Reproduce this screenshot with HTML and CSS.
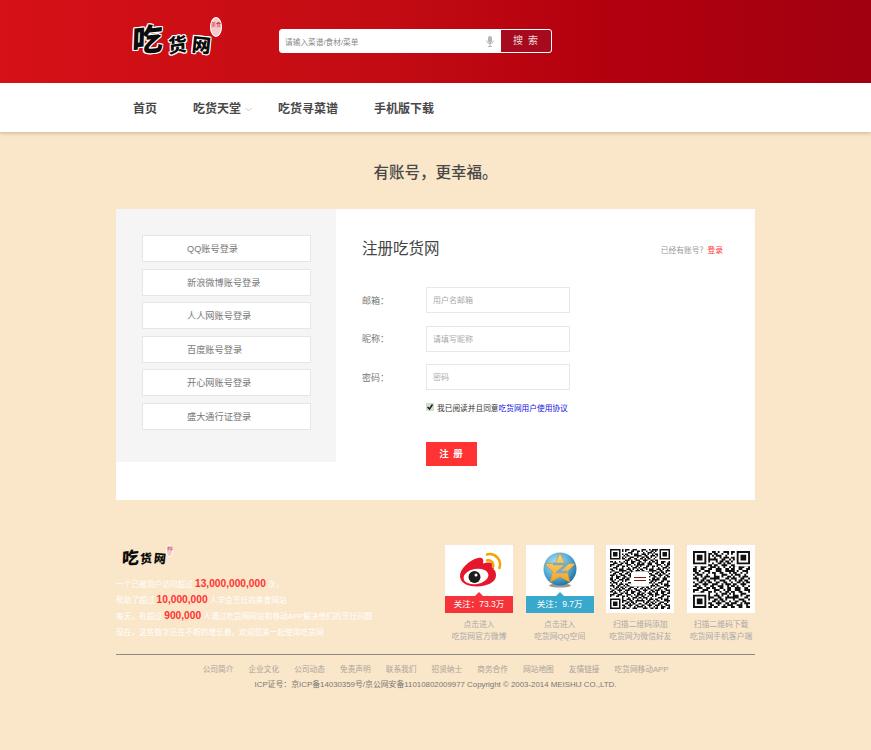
FILE: index.html
```html
<!DOCTYPE html>
<html lang="zh-CN">
<head>
<meta charset="utf-8">
<title>注册吃货网</title>
<link rel="stylesheet" href="styles.css">
</head>
<body>
<svg class="defs" width="0" height="0" aria-hidden="true">
  <defs>
    <g id="finder">
      <rect x="-1" y="-1" width="9" height="9" fill="#fff"/>
      <path d="M0 0h7v7h-7zM1 1v5h5v-5zM2 2h3v3h-3z" fill="#111" fill-rule="evenodd"/>
    </g>
    <path id="blk" fill="none" stroke="#111" d="M0 .5h2m1 0h1m2 0h3M1 1.500h2m2 0h1m2 0h1M0 2.500h1m1 0h3m2 0h1M1 3.500h1m2 0h1m1 0h3M0 4.500h3m2 0h2m2 0h1M2 5.500h1m1 0h2m1 0h2M0 6.500h1m2 0h2m1 0h1m1 0h2M1 7.500h2m2 0h3M0 8.500h2m1 0h1m2 0h1m2 0h1M2 9.500h3m2 0h2"/>
    <path id="blk2" fill="none" stroke="#111" d="M0 .5h3m2 0h3M0 1.500h1m3 0h2m2 0h2M2 2.500h3m3 0h1M0 3.500h2m2 0h1m1 0h3M1 4.500h2m3 0h4M0 5.500h1m2 0h3m2 0h1M2 6.500h2m2 0h2M0 7.500h3m1 0h1m2 0h3M1 8.500h1m2 0h3m2 0h1M0 9.500h2m2 0h2m2 0h2"/>
  </defs>
</svg>
<header class="topbar">
  <div class="wrap topbar-in">
    <div class="logo"><span class="logo-c1">吃</span><span class="logo-c2">货</span><span class="logo-c3">网</span><span class="seal">美食</span></div>
    <form class="search">
      <span class="search-text">请输入菜谱/食材/菜单</span>
      <svg class="mic" width="8" height="11" viewBox="0 0 8 11"><rect x="2" y="0" width="4" height="7" rx="2" fill="#b5b5b5"/><path d="M.7 4.500c0 4.200 6.600 4.200 6.600 0M4 8v2M2 10.500h4" fill="none" stroke="#b5b5b5"/></svg>
      <span class="search-btn">搜 索</span>
    </form>
  </div>
</header>
<nav class="nav">
  <div class="wrap nav-in">
    <a class="nav-item n1">首页</a>
    <a class="nav-item n2">吃货天堂<svg class="chev" width="7" height="5" viewBox="0 0 7 5"><path d="M.5 1l3 3 3-3" fill="none" stroke="#c9c9c9"/></svg></a>
    <a class="nav-item n3">吃货寻菜谱</a>
    <a class="nav-item n4">手机版下载</a>
  </div>
</nav>
<h2 class="slogan">有账号，更幸福。</h2>
<main class="panel">
  <aside class="side">
    <a class="oauth">QQ账号登录</a>
    <a class="oauth">新浪微博账号登录</a>
    <a class="oauth">人人网账号登录</a>
    <a class="oauth">百度账号登录</a>
    <a class="oauth">开心网账号登录</a>
    <a class="oauth">盛大通行证登录</a>
  </aside>
  <section class="form">
    <div class="form-head">
      <h1>注册吃货网</h1>
      <p>已经有账号？<a>登录</a></p>
    </div>
    <div class="row"><label>邮箱：</label><span class="field">用户名邮箱</span></div>
    <div class="row"><label>昵称：</label><span class="field">请填写昵称</span></div>
    <div class="row"><label>密码：</label><span class="field">密码</span></div>
    <div class="agree">
      <svg width="8" height="8" viewBox="0 0 8 8"><rect width="8" height="8" fill="#cfe0cf"/><path d="M1.500 4l2 2 3-4.500" fill="none" stroke="#222" stroke-width="1.500"/></svg>
      <span>我已阅读并且同意<a>吃货网用户使用协议</a></span>
    </div>
    <a class="submit">注 册</a>
  </section>
</main>
<footer class="footer">
  <div class="foot-top">
    <div class="about">
      <div class="logo logo-small"><span class="logo-c1">吃</span><span class="logo-c2">货</span><span class="logo-c3">网</span><span class="seal">美食</span></div>
      <p>一个已被用户访问超过 <b>13,000,000,000</b> 次，</p>
      <p>帮助了超过 <b>10,000,000</b> 人学会烹饪的美食网站</p>
      <p>每天，有超过 <b>900,000</b> 人通过吃货网网站和移动APP解决他们的烹饪问题</p>
      <p>现在，这些数字还在不断的增长着，欢迎您来一起使用吃货网</p>
    </div>
    <div class="cards">
      <figure class="card">
        <div class="tile">
          <svg class="tile-icon" width="68" height="51" viewBox="0 0 68 51">
            <path d="M15 31c0-7 9-16 18-18 5-1 6 2 5 5.500 4-1.500 10-2 11 2 .5 2-.5 3-.5 4 2 1 2.500 3.500 2.500 6 0 7-10 11-19 11-10 0-17-4-17-10.500z" fill="#e6162d"/>
            <ellipse cx="31" cy="31.500" rx="12.500" ry="7.500" fill="#fff" transform="rotate(-10 31 31.500)"/>
            <circle cx="29.500" cy="32" r="6" fill="#1c1c1c"/>
            <circle cx="31" cy="30" r="1.500" fill="#fff"/>
            <path d="M42 15.500c3.500-1 7 2 6 6.500M42 9.500c8-2 15 5 12.500 13.500" fill="none" stroke="#f5a300" stroke-width="2.500" stroke-linecap="round"/>
          </svg>
          <div class="tile-bar red">关注：73.3万</div>
        </div>
        <figcaption>点击进入<br>吃货网官方微博</figcaption>
      </figure>
      <figure class="card">
        <div class="tile">
          <svg class="tile-icon" width="68" height="51" viewBox="0 0 68 51">
            <defs>
              <radialGradient id="ball" cx=".4" cy=".35" r=".75"><stop offset="0" stop-color="#bfe6f5"/><stop offset=".6" stop-color="#4aa6d6"/><stop offset="1" stop-color="#135f8c"/></radialGradient>
              <linearGradient id="gold" x1="0" y1="0" x2="0" y2="1"><stop offset="0" stop-color="#fbd874"/><stop offset="1" stop-color="#eda52e"/></linearGradient>
            </defs>
            <ellipse cx="34" cy="40.500" rx="11" ry="2" fill="#555" opacity=".6"/>
            <circle cx="34" cy="24" r="16.500" fill="url(#ball)"/>
            <path d="M34 8l4.500 10 10.500 1-7.500 7.500 2.500 11-10-5.500-10 5.500 2.500-11-7.500-7.500 10.500-1z" fill="url(#gold)" stroke="#d88a1c" stroke-width=".6" stroke-linejoin="round"/>
            <path d="M27 19h14l-9 8h9" fill="none" stroke="#7fa9bc" stroke-width="2.500"/>
          </svg>
          <div class="tile-bar blue">关注：9.7万</div>
        </div>
        <figcaption>点击进入<br>吃货网QQ空间</figcaption>
      </figure>
      <figure class="card">
        <div class="tile">
          <svg class="qr" width="60" height="60" viewBox="0 0 40 40">
            <use href="#blk"/>
            <use href="#blk2" x="10"/>
            <use href="#blk" transform="translate(30 0) scale(-1 1)"/>
            <use href="#blk2" x="30"/>
            <use href="#blk2" y="10"/>
            <use href="#blk" transform="translate(20 10) scale(-1 1)"/>
            <use href="#blk2" x="20" y="10"/>
            <use href="#blk" transform="translate(40 10) scale(-1 1)"/>
            <use href="#blk" y="20"/>
            <use href="#blk2" x="10" y="20"/>
            <use href="#blk" transform="translate(30 20) scale(-1 1)"/>
            <use href="#blk2" x="30" y="20"/>
            <use href="#blk2" y="30"/>
            <use href="#blk" transform="translate(20 30) scale(-1 1)"/>
            <use href="#blk" x="20" y="30"/>
            <use href="#blk2" x="30" y="30"/>
            <use href="#finder"/><use href="#finder" x="33"/><use href="#finder" y="33"/>
            <rect x="14" y="15" width="12" height="10" rx="2" fill="#fff"/>
            <path d="M16 19h8M16 21h8" stroke="#7a1a1a" stroke-width=".8"/>
          </svg>
        </div>
        <figcaption>扫描二维码添加<br>吃货网为微信好友</figcaption>
      </figure>
      <figure class="card">
        <div class="tile">
          <svg class="qr" width="57" height="57" viewBox="0 0 30 30">
            <use href="#blk2"/>
            <use href="#blk" x="10"/>
            <use href="#blk2" x="20"/>
            <use href="#blk" y="10"/>
            <use href="#blk2" transform="translate(20 10) scale(-1 1)"/>
            <use href="#blk" x="20" y="10"/>
            <use href="#blk2" y="20"/>
            <use href="#blk" transform="translate(20 20) scale(-1 1)"/>
            <use href="#blk2" transform="translate(30 20) scale(-1 1)"/>
            <use href="#finder"/><use href="#finder" x="23"/><use href="#finder" y="23"/>
          </svg>
        </div>
        <figcaption>扫描二维码下载<br>吃货网手机客户端</figcaption>
      </figure>
    </div>
  </div>
  <div class="foot-links">
    <a>公司简介</a><a>企业文化</a><a>公司动态</a><a>免责声明</a><a>联系我们</a><a>招贤纳士</a><a>商务合作</a><a>网站地图</a><a>友情链接</a><a>吃货网移动APP</a>
  </div>
  <p class="icp">ICP证号：京ICP备14030359号/京公网安备11010802009977 Copyright © 2003-2014 MEISHIJ CO.,LTD.</p>
</footer>
</body>
</html>
```

FILE: styles.css
```css
* { box-sizing: border-box; }
html, body { margin: 0; padding: 0; }
body {
  width: 871px;
  height: 750px;
  overflow: hidden;
  background: #fae6c8;
  font-family: "Liberation Sans", "Noto Sans CJK SC", sans-serif;
  color: #666;
}
a { color: inherit; text-decoration: none; }
p, h1, h2, figure { margin: 0; }
.defs { position: absolute; }
.wrap { width: 639px; margin-left: 116px; }

.topbar {
  height: 83px;
  background: linear-gradient(90deg, #d61117 0%, #c20b13 45%, #b3000e 70%, #a00010 100%);
}
.topbar-in { display: flex; height: 100%; }
.logo {
  position: relative;
  width: 163px;
  height: 100%;
  font-family: "Noto Sans CJK SC", sans-serif;
  font-weight: 900;
  color: #0c0c0c;
}
.logo span {
  position: absolute;
  text-shadow: 1px 0 0 #fff, -1px 0 0 #fff, 0 1px 0 #fff, 0 -1px 0 #fff, 1px 1px 0 #fff, -1px -1px 0 #fff, 1px -1px 0 #fff, -1px 1px 0 #fff;
}
.logo-c1 { left: 16px; top: 20px; font-size: 31px; line-height: 36px; transform: rotate(-6deg) skewX(-8deg); }
.logo-c2 { left: 52px; top: 31px; font-size: 19px; line-height: 26px; transform: rotate(-8deg) skewX(-6deg); }
.logo-c3 { left: 76px; top: 31px; font-size: 19px; line-height: 26px; transform: rotate(6deg); }
.logo .seal {
  left: 94px;
  top: 17px;
  width: 12px;
  height: 20px;
  border-radius: 50%;
  background: #f4c9c9;
  border: 1px solid #fff;
  color: #c8141c;
  font-size: 5px;
  line-height: 7px;
  font-weight: 400;
  text-align: center;
  text-shadow: none;
  padding-top: 2px;
}
.search {
  display: flex;
  align-items: center;
  width: 273px;
  height: 24px;
  margin-top: 29px;
  background: #fff;
  border: 1px solid #fff;
  border-radius: 3px;
  overflow: hidden;
}
.search-text { flex: 1; padding-left: 5px; font-size: 7.700px; color: #8a8a8a; }
.mic { margin-right: 6px; }
.search-btn {
  width: 51px;
  height: 100%;
  background: #a50a1e;
  border-left: 1px solid #fff;
  color: #f5dcdc;
  font-size: 10px;
  letter-spacing: 1px;
  line-height: 22px;
  text-align: center;
}

.nav {
  position: relative;
  height: 49px;
  background: #fff;
  box-shadow: 0 2px 3px rgba(160, 130, 90, .35);
}
.nav-in { display: flex; height: 100%; align-items: center; }
.nav-item {
  font-family: "Noto Sans CJK SC", sans-serif;
  font-size: 12px;
  font-weight: 700;
  color: #484848;
  white-space: nowrap;
}
.n1 { margin-left: 17px; }
.n2 { margin-left: 36px; }
.n3 { margin-left: 26px; }
.n4 { margin-left: 36px; }
.chev { margin-left: 4px; vertical-align: 1px; }

.slogan {
  margin-top: 29px;
  height: 20px;
  text-align: center;
  font-family: "Noto Sans CJK SC", sans-serif;
  font-size: 15.500px;
  line-height: 20px;
  font-weight: 500;
  color: #484848;
}

.panel {
  display: flex;
  align-items: flex-start;
  width: 639px;
  height: 291px;
  margin: 28px 0 0 116px;
  background: #fff;
}
.side {
  display: flex;
  flex-direction: column;
  gap: 6.500px;
  width: 220px;
  height: 253px;
  padding: 26px 25px 0 26px;
  background: #f5f5f5;
}
.oauth {
  height: 27px;
  background: #fff;
  border: 1px solid #e6e6e6;
  padding-left: 44px;
  font-size: 9.200px;
  line-height: 26px;
  color: #777;
}
.form { flex: 1; padding: 30px 32px 0 26px; }
.form-head { display: flex; justify-content: space-between; align-items: center; height: 20px; }
.form-head h1 { font-size: 15.500px; font-weight: 400; color: #444; line-height: 20px; }
.form-head p { font-size: 7.800px; color: #999; }
.form-head p a { color: #f33; }
.row {
  display: flex;
  align-items: center;
  height: 26px;
  margin-bottom: 12.700px;
  font-size: 9px;
  color: #777;
}
.form-head + .row { margin-top: 28px; }
.row label { width: 64px; }
.field {
  width: 144px;
  height: 26px;
  background: #fff;
  border: 1px solid #e8e8e8;
  padding-left: 6px;
  font-size: 8px;
  line-height: 25px;
  color: #aaa;
}
.agree {
  display: flex;
  align-items: center;
  gap: 3px;
  height: 10px;
  margin: -1px 0 0 64px;
  font-size: 7.700px;
  color: #333;
  white-space: nowrap;
}
.agree a { color: #1111dd; }
.submit {
  display: block;
  width: 51px;
  height: 24px;
  margin: 30px 0 0 64px;
  background: #f33;
  color: #fff;
  font-size: 9.500px;
  letter-spacing: 1px;
  font-weight: 700;
  line-height: 24px;
  text-align: center;
}

.footer { width: 639px; margin: 45px 0 0 116px; }
.foot-top { display: flex; justify-content: space-between; height: 109px; }
.about { width: 325px; color: #fff; font-size: 7.700px; line-height: 16.300px; white-space: nowrap; }
.about b { color: #f33; font-size: 10.200px; font-weight: 700; line-height: 1; }
.logo-small { width: 60px; height: 31.500px; }
.logo-small .logo-c1 { left: 6px; top: 1px; font-size: 17px; line-height: 22px; text-shadow: none; }
.logo-small .logo-c2 { left: 24px; top: 5px; font-size: 12px; line-height: 16px; text-shadow: none; }
.logo-small .logo-c3 { left: 38px; top: 5px; font-size: 12px; line-height: 16px; text-shadow: none; }
.logo-small .seal { left: 50px; top: 0; width: 7px; height: 12px; font-size: 3px; line-height: 4px; padding-top: 1px; }
.cards { display: flex; gap: 12.700px; width: 310px; }
.card { width: 68px; flex: none; }
.tile {
  position: relative;
  height: 68px;
  background: #fff;
  overflow: hidden;
  display: flex;
  align-items: center;
  justify-content: center;
}
.tile-icon { position: absolute; left: 0; top: 0; }
.tile-bar {
  position: absolute;
  left: 0;
  right: 0;
  bottom: 0;
  height: 17px;
  color: #fff;
  font-size: 8.500px;
  line-height: 17px;
  text-align: center;
}
.tile-bar::before {
  content: "";
  position: absolute;
  left: 30px;
  top: -4px;
  border: 4px solid transparent;
  border-top: 0;
  border-bottom-color: inherit;
}
.red { background: #f6333a; border-color: #f6333a; }
.blue { background: #38a9cd; border-color: #38a9cd; }
figcaption {
  margin: 6px -6px 0;
  text-align: center;
  color: #aaa;
  font-size: 7.800px;
  line-height: 12px;
  white-space: nowrap;
}
.foot-links {
  display: flex;
  justify-content: center;
  gap: 15px;
  border-top: 1px solid #8f8a80;
  padding-top: 8px;
  height: 23px;
  font-size: 7.700px;
  line-height: 13px;
  color: #a9a59b;
  white-space: nowrap;
}
.icp {
  text-align: center;
  margin-top: 2px;
  font-size: 7.870px;
  line-height: 12px;
  color: #777;
  white-space: nowrap;
}
```
